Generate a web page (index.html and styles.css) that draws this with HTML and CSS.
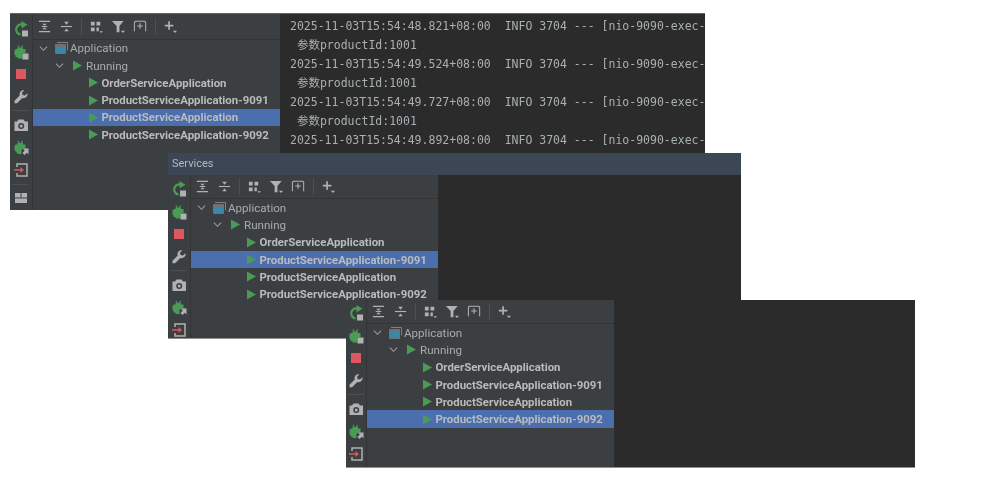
FILE: index.html
```html
<!DOCTYPE html>
<html lang="zh">
<head>
<meta charset="utf-8">
<title>Services</title>
<link rel="stylesheet" href="styles.css">
</head>
<body>
<svg class="sprites" width="0" height="0" aria-hidden="true">
  <symbol id="i-rerun" viewBox="0 0 16 16"><path d="M9 3.500A5 5 0 1 0 7.500 13.500" fill="none" stroke="#499c54" stroke-width="2.200"/><path d="M8.500 0L14.500 3.800 8.500 7.500z" fill="#499c54"/><rect x="9" y="9.500" width="6" height="6" fill="#afb1b3"/></symbol>
  <symbol id="i-debug" viewBox="0 0 16 16"><path d="M4.500 3.500h5.500v1.500h2.500v4H9.500v5.500h-5V13H2.500v-2H1.500V6H2.500V5h2z" fill="#499c54"/><path d="M5 1.500l1 2M9.500 1.500l-1 2" stroke="#499c54" stroke-width="1.300" fill="none"/><rect x="9.500" y="9.500" width="6" height="6" fill="#afb1b3"/></symbol>
  <symbol id="i-stop" viewBox="0 0 16 16"><rect x="3" y="3" width="10" height="10" fill="#db5860"/></symbol>
  <symbol id="i-wrench" viewBox="0 0 16 16"><path d="M14.500 4.200l-2.600 2.400-2.300-.6-.6-2.300L11.400 1.300A4 4 0 0 0 6.700 6.500L1.500 11.700v2.600h2.600l5.300-5.300a4 4 0 0 0 5.100-4.800z" fill="#afb1b3"/></symbol>
  <symbol id="i-camera" viewBox="0 0 16 16"><path fill-rule="evenodd" d="M5.500 2.500h5L12 4.500h3v9.500H1.500V4.500H4zM8.200 6a3 3 0 1 0 0 6 3 3 0 0 0 0-6zm0 1.500a1.500 1.500 0 1 1 0 3 1.500 1.500 0 0 1 0-3z" fill="#afb1b3"/></symbol>
  <symbol id="i-bugarrow" viewBox="0 0 16 16"><path d="M4.500 3h5.500v1.500h2.500V8.500H10L8.500 10v4h-4V12.500H2.500v-2H1.500V5.500H2.500V4.500h2z" fill="#499c54"/><path d="M5 1l1 2M9.500 1l-1 2" stroke="#499c54" stroke-width="1.300" fill="none"/><path d="M9.500 8.500H15.500V14.500L13.800 12.800 11.500 15 9.500 13 11.800 10.500z" fill="#afb1b3"/></symbol>
  <symbol id="i-exit" viewBox="0 0 16 16"><path d="M4 5V2h10v12H4v-3" fill="none" stroke="#afb1b3" stroke-width="1.500"/><path d="M1 7.200h6.500V5L11 8l-3.500 3V8.800H1z" fill="#db5860"/></symbol>
  <symbol id="i-layout" viewBox="0 0 16 16"><rect x="2" y="3" width="5.500" height="4.500" fill="#afb1b3"/><rect x="8.500" y="3" width="5.500" height="4.500" fill="#afb1b3"/><rect x="2" y="8.500" width="12" height="4.500" fill="#afb1b3"/></symbol>
  <symbol id="i-expand" viewBox="0 0 16 16"><path d="M2 2.500h12M2 13.500h12M5 8h6" stroke="#afb1b3" stroke-width="1.200" fill="none"/><path d="M5.500 5h5L8 7.300zM5.500 11h5L8 8.700z" fill="#afb1b3"/></symbol>
  <symbol id="i-collapse" viewBox="0 0 16 16"><path d="M2 8h12" stroke="#afb1b3" stroke-width="1.200"/><path d="M5.500 3h5L8 6zM5.500 13h5L8 10z" fill="#afb1b3"/></symbol>
  <symbol id="i-group" viewBox="0 0 16 16"><path d="M2 3h4v4H2zM8 3h4v4H8zM2 9h4v4H2zM8 9h2.500v4H8z" fill="#afb1b3"/><path d="M11 13h4l-2 2z" fill="#afb1b3"/></symbol>
  <symbol id="i-filter" viewBox="0 0 16 16"><path d="M1 2h12.500L9 7.500V14H6V7.500z" fill="#afb1b3"/><path d="M10.500 12.500h4.500l-2.200 2.300z" fill="#afb1b3"/></symbol>
  <symbol id="i-tab" viewBox="0 0 16 16"><path d="M1.500 13V3.500l1-1h10l1 1V13" fill="none" stroke="#afb1b3" stroke-width="1.100"/><path d="M4.500 7.500h6M7.500 4.500v6" stroke="#afb1b3" stroke-width="1.200"/></symbol>
  <symbol id="i-plus" viewBox="0 0 16 16"><path d="M6.500 2.500v9M2 7h9" stroke="#afb1b3" stroke-width="1.800"/><path d="M10.500 12.500h4.500l-2.200 2.300z" fill="#afb1b3"/></symbol>
  <symbol id="i-chevron" viewBox="0 0 10 10"><path d="M1 3l4 4 4-4" fill="none" stroke="#9a9c9e" stroke-width="1.200"/></symbol>
  <symbol id="i-app" viewBox="0 0 14 14"><path d="M3 1.500h10.500V9.500" fill="none" stroke="#7e8285"/><rect x="1" y="3" width="11" height="10" rx="1" fill="#6e7376"/><rect x="2" y="6" width="9" height="6" fill="#3b87a8"/></symbol>
  <symbol id="i-play" viewBox="0 0 12 12" preserveAspectRatio="none"><path d="M0 .5L12 6 0 11.500z" fill="#499c54"/></symbol>
</svg>

<main class="desktop">
  <section class="window window-back">
    <div class="frame">
      <nav class="rail">
        <svg class="ri"><use href="#i-rerun"/></svg>
        <svg class="ri"><use href="#i-debug"/></svg>
        <svg class="ri"><use href="#i-stop"/></svg>
        <svg class="ri"><use href="#i-wrench"/></svg>
        <hr class="rail-sep">
        <svg class="ri"><use href="#i-camera"/></svg>
        <svg class="ri"><use href="#i-bugarrow"/></svg>
        <svg class="ri"><use href="#i-exit"/></svg>
        <hr class="rail-sep">
        <svg class="ri"><use href="#i-layout"/></svg>
      </nav>
      <div class="pane">
        <div class="toolbar">
          <svg class="ti"><use href="#i-expand"/></svg>
          <svg class="ti"><use href="#i-collapse"/></svg>
          <span class="tool-sep"></span>
          <svg class="ti"><use href="#i-group"/></svg>
          <svg class="ti"><use href="#i-filter"/></svg>
          <svg class="ti"><use href="#i-tab"/></svg>
          <span class="tool-sep"></span>
          <svg class="ti"><use href="#i-plus"/></svg>
        </div>
        <ul class="tree">
          <li class="row lvl0"><svg class="chev"><use href="#i-chevron"/></svg><svg class="app"><use href="#i-app"/></svg><span class="group-name">Application</span></li>
          <li class="row lvl1"><svg class="chev"><use href="#i-chevron"/></svg><svg class="play"><use href="#i-play"/></svg><span class="group-name">Running</span></li>
          <li class="row lvl2"><svg class="play"><use href="#i-play"/></svg><b class="svc">OrderServiceApplication</b></li>
          <li class="row lvl2"><svg class="play"><use href="#i-play"/></svg><b class="svc">ProductServiceApplication-9091</b></li>
          <li class="row lvl2 sel"><svg class="play"><use href="#i-play"/></svg><b class="svc">ProductServiceApplication</b></li>
          <li class="row lvl2"><svg class="play"><use href="#i-play"/></svg><b class="svc">ProductServiceApplication-9092</b></li>
        </ul>
      </div>
      <pre class="console">2025-11-03T15:54:48.821+08:00  INFO 3704 --- [nio-9090-exec-
 参数productId:1001
2025-11-03T15:54:49.524+08:00  INFO 3704 --- [nio-9090-exec-
 参数productId:1001
2025-11-03T15:54:49.727+08:00  INFO 3704 --- [nio-9090-exec-
 参数productId:1001
2025-11-03T15:54:49.892+08:00  INFO 3704 --- [nio-9090-exec-</pre>
    </div>
  </section>

  <section class="window window-mid">
    <header class="titlebar">Services</header>
    <div class="frame">
      <nav class="rail">
        <svg class="ri"><use href="#i-rerun"/></svg>
        <svg class="ri"><use href="#i-debug"/></svg>
        <svg class="ri"><use href="#i-stop"/></svg>
        <svg class="ri"><use href="#i-wrench"/></svg>
        <hr class="rail-sep">
        <svg class="ri"><use href="#i-camera"/></svg>
        <svg class="ri"><use href="#i-bugarrow"/></svg>
        <svg class="ri"><use href="#i-exit"/></svg>
      </nav>
      <div class="pane">
        <div class="toolbar">
          <svg class="ti"><use href="#i-expand"/></svg>
          <svg class="ti"><use href="#i-collapse"/></svg>
          <span class="tool-sep"></span>
          <svg class="ti"><use href="#i-group"/></svg>
          <svg class="ti"><use href="#i-filter"/></svg>
          <svg class="ti"><use href="#i-tab"/></svg>
          <span class="tool-sep"></span>
          <svg class="ti"><use href="#i-plus"/></svg>
        </div>
        <ul class="tree">
          <li class="row lvl0"><svg class="chev"><use href="#i-chevron"/></svg><svg class="app"><use href="#i-app"/></svg><span class="group-name">Application</span></li>
          <li class="row lvl1"><svg class="chev"><use href="#i-chevron"/></svg><svg class="play"><use href="#i-play"/></svg><span class="group-name">Running</span></li>
          <li class="row lvl2"><svg class="play"><use href="#i-play"/></svg><b class="svc">OrderServiceApplication</b></li>
          <li class="row lvl2 sel"><svg class="play"><use href="#i-play"/></svg><b class="svc">ProductServiceApplication-9091</b></li>
          <li class="row lvl2"><svg class="play"><use href="#i-play"/></svg><b class="svc">ProductServiceApplication</b></li>
          <li class="row lvl2"><svg class="play"><use href="#i-play"/></svg><b class="svc">ProductServiceApplication-9092</b></li>
        </ul>
      </div>
      <div class="console"></div>
    </div>
  </section>

  <section class="window window-front">
    <div class="frame">
      <nav class="rail">
        <svg class="ri"><use href="#i-rerun"/></svg>
        <svg class="ri"><use href="#i-debug"/></svg>
        <svg class="ri"><use href="#i-stop"/></svg>
        <svg class="ri"><use href="#i-wrench"/></svg>
        <hr class="rail-sep">
        <svg class="ri"><use href="#i-camera"/></svg>
        <svg class="ri"><use href="#i-bugarrow"/></svg>
        <svg class="ri"><use href="#i-exit"/></svg>
      </nav>
      <div class="pane">
        <div class="toolbar">
          <svg class="ti"><use href="#i-expand"/></svg>
          <svg class="ti"><use href="#i-collapse"/></svg>
          <span class="tool-sep"></span>
          <svg class="ti"><use href="#i-group"/></svg>
          <svg class="ti"><use href="#i-filter"/></svg>
          <svg class="ti"><use href="#i-tab"/></svg>
          <span class="tool-sep"></span>
          <svg class="ti"><use href="#i-plus"/></svg>
        </div>
        <ul class="tree">
          <li class="row lvl0"><svg class="chev"><use href="#i-chevron"/></svg><svg class="app"><use href="#i-app"/></svg><span class="group-name">Application</span></li>
          <li class="row lvl1"><svg class="chev"><use href="#i-chevron"/></svg><svg class="play"><use href="#i-play"/></svg><span class="group-name">Running</span></li>
          <li class="row lvl2"><svg class="play"><use href="#i-play"/></svg><b class="svc">OrderServiceApplication</b></li>
          <li class="row lvl2"><svg class="play"><use href="#i-play"/></svg><b class="svc">ProductServiceApplication-9091</b></li>
          <li class="row lvl2"><svg class="play"><use href="#i-play"/></svg><b class="svc">ProductServiceApplication</b></li>
          <li class="row lvl2 sel"><svg class="play"><use href="#i-play"/></svg><b class="svc">ProductServiceApplication-9092</b></li>
        </ul>
      </div>
      <div class="console"></div>
    </div>
  </section>
</main>
</body>
</html>
```

FILE: styles.css
```css
html, body {
  margin: 0;
  padding: 0;
  background: #fff;
}

.sprites {
  position: absolute;
}

.desktop {
  position: relative;
  width: 984px;
  height: 486px;
  overflow: hidden;
}

.window {
  position: absolute;
  display: flex;
  flex-direction: column;
  box-sizing: border-box;
  background: #3c3f41;
  filter: blur(0.35px);
  font-family: Roboto, "Noto Sans", sans-serif;
  color: #bbbbbb;
  overflow: hidden;
}

.window-back {
  left: 10px;
  top: 13px;
  width: 695px;
  height: 197px;
  border-top: 1px solid #5b6572;
}

.window-mid {
  left: 168px;
  top: 153px;
  width: 573px;
  height: 186px;
  border-bottom: 1px solid #8f9193;
}

.window-front {
  left: 346px;
  top: 300px;
  width: 569px;
  height: 168px;
  border-bottom: 1px solid #8f9193;
}

.titlebar {
  flex: none;
  height: 22px;
  line-height: 22px;
  padding-left: 4px;
  background: #3c4654;
  font-size: 11px;
  color: #b4b8bd;
}

.frame {
  flex: 1;
  min-height: 0;
  display: flex;
}

.rail {
  flex: none;
  width: 23px;
  box-sizing: border-box;
  display: flex;
  flex-direction: column;
  align-items: center;
  padding: 7px 1px 0 0;
  gap: 6.600px;
  border-right: 1px solid #323436;
}

.window-mid .rail {
  padding-top: 6px;
}

.window-front .rail {
  width: 21px;
  padding-top: 5px;
}

.ri {
  flex: none;
  width: 16px;
  height: 16px;
}

.rail-sep {
  flex: none;
  width: 17px;
  height: 1px;
  margin: -1px 0;
  border: 0;
  background: #4d5052;
}

.pane {
  flex: none;
  width: 247px;
  display: flex;
  flex-direction: column;
}

.toolbar {
  flex: none;
  height: 25.600px;
  box-sizing: border-box;
  display: flex;
  align-items: center;
  padding-left: 4px;
  gap: 7px;
  border-bottom: 1px solid #323436;
}

.window-mid .toolbar,
.window-front .toolbar {
  height: 24px;
}

.ti {
  flex: none;
  width: 15px;
  height: 15px;
}

.tool-sep {
  flex: none;
  width: 1px;
  height: 17px;
  background: #4d5052;
}

.tree {
  list-style: none;
  margin: 0;
  padding: 0;
  flex: 1;
}

.row {
  height: 17.300px;
  display: flex;
  align-items: center;
  font-size: 11.600px;
  white-space: nowrap;
}

.lvl0 { padding-left: 6px; }
.lvl1 { padding-left: 22px; }
.lvl2 { padding-left: 56px; }

.sel { background: #4b6eaf; }

.chev {
  flex: none;
  width: 9px;
  height: 9px;
  margin-right: 6px;
}

.app {
  flex: none;
  width: 14px;
  height: 14px;
  margin-right: 2px;
}

.play {
  flex: none;
  width: 9px;
  height: 11px;
  margin-right: 3.500px;
}

.lvl1 .play {
  margin: 0 4px 0 3px;
}

.group-name {
  color: #a9abad;
}

.svc {
  font-size: 11.400px;
  font-weight: 700;
  color: #bbbbbb;
}

.console {
  flex: 1;
  min-width: 0;
  margin: 0;
  padding: 3px 0 0 10px;
  background: #2b2b2b;
  overflow: hidden;
  font-family: "DejaVu Sans Mono", "Noto Sans CJK SC", monospace;
  font-size: 11.500px;
  line-height: 19px;
  color: #a9b0b3;
}
```
